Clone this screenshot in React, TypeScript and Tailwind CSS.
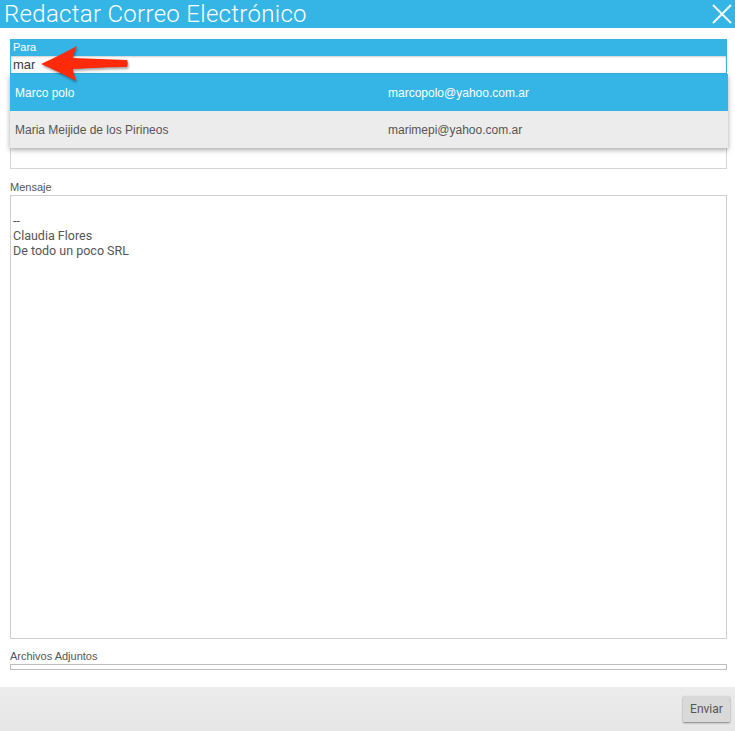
import React from 'react';

const contacts = [
  { name: 'Marco polo', email: 'marcopolo@yahoo.com.ar', active: true },
  { name: 'Maria Meijide de los Pirineos', email: 'marimepi@yahoo.com.ar', active: false },
];

const Arrow = () => (
  <svg
    className="absolute left-[36px] top-[14px] drop-shadow-[1px_2px_1px_rgba(0,0,0,0.35)]"
    width="100"
    height="44"
    viewBox="0 0 100 44"
  >
    <path
      d="M5 22 C 18 16, 30 10, 41 4 C 39 8, 37 13, 37 16 C 55 17, 75 17, 91 18 C 92 20, 92 23, 91 25 C 75 25, 55 26, 37 27 C 37 30, 39 35, 40 39 C 29 33, 17 27, 5 22 Z"
      fill="#ff2a0a"
    />
  </svg>
);

export default function App() {
  return (
    <div className="w-[735px] h-[731px] bg-white flex flex-col font-['Liberation_Sans',Arial,sans-serif] text-[#555]">
      <div className="h-[28px] bg-[#35b5e5] flex items-center justify-between pl-[4px] pr-[3px]">
        <h1 className="text-white text-[24px] font-light leading-none font-['Roboto',sans-serif] tracking-[0.3px]">
          Redactar Correo Electrónico
        </h1>
        <svg width="20" height="20" viewBox="0 0 20 20">
          <path d="M1 1 L19 19 M19 1 L1 19" stroke="white" strokeWidth="1.8" fill="none" />
        </svg>
      </div>

      <div className="flex-1 flex flex-col pl-[10px] pr-[8px] pt-[11px] relative">
        <div className="bg-[#35b5e5] px-[1px] pb-[1px]">
          <div className="text-white text-[11px] leading-[17px] pl-[2px]">Para</div>
          <div className="bg-white h-[17px] flex items-center pl-[2px] text-[13px] text-[#3a3a3a] shadow-[inset_0_1px_2px_rgba(0,0,0,0.2)]">
            mar
          </div>
        </div>

        {/* campo oculto bajo el desplegable */}
        <div className="mt-[29px] h-[66px] border border-[#d4d4d4] bg-white" />

        <div className="mt-[11px] text-[11px] leading-[14px] text-[#555]">Mensaje</div>
        <div className="mt-[1px] h-[444px] border border-[#cfcfcf] bg-white pl-[2px] pt-[2px] text-[12.5px] leading-[15px] text-[#555] font-['Roboto',sans-serif]">
          <div>&nbsp;</div>
          <div>--</div>
          <div>Claudia Flores</div>
          <div>De todo un poco SRL</div>
        </div>

        <div className="mt-[10px] text-[11px] leading-[14px] text-[#555]">Archivos Adjuntos</div>
        <div className="mt-[1px] h-[6px] border border-[#bdbdbd] bg-white" />

        <div className="absolute left-[10px] right-[7px] top-[46px] shadow-[0_2px_5px_rgba(0,0,0,0.35)]">
          {contacts.map((c) => (
            <div
              key={c.email}
              className={`h-[37px] flex items-center text-[12px] ${
                c.active ? 'bg-[#35b5e5] text-white' : 'bg-[#ececec] text-[#555]'
              }`}
            >
              <div className="w-[378px] pl-[5px]">{c.name}</div>
              <div>{c.email}</div>
            </div>
          ))}
        </div>

        <Arrow />
      </div>

      <div className="h-[44px] bg-gradient-to-b from-[#ececec] to-[#e6e6e6] flex items-center justify-end pr-[5px]">
        <button className="w-[47px] h-[26px] bg-[#d9d9d9] text-[#555] text-[12px] font-['Roboto',sans-serif] shadow-[0_1px_2px_rgba(0,0,0,0.45)] rounded-[1px]">
          Enviar
        </button>
      </div>
    </div>
  );
}
